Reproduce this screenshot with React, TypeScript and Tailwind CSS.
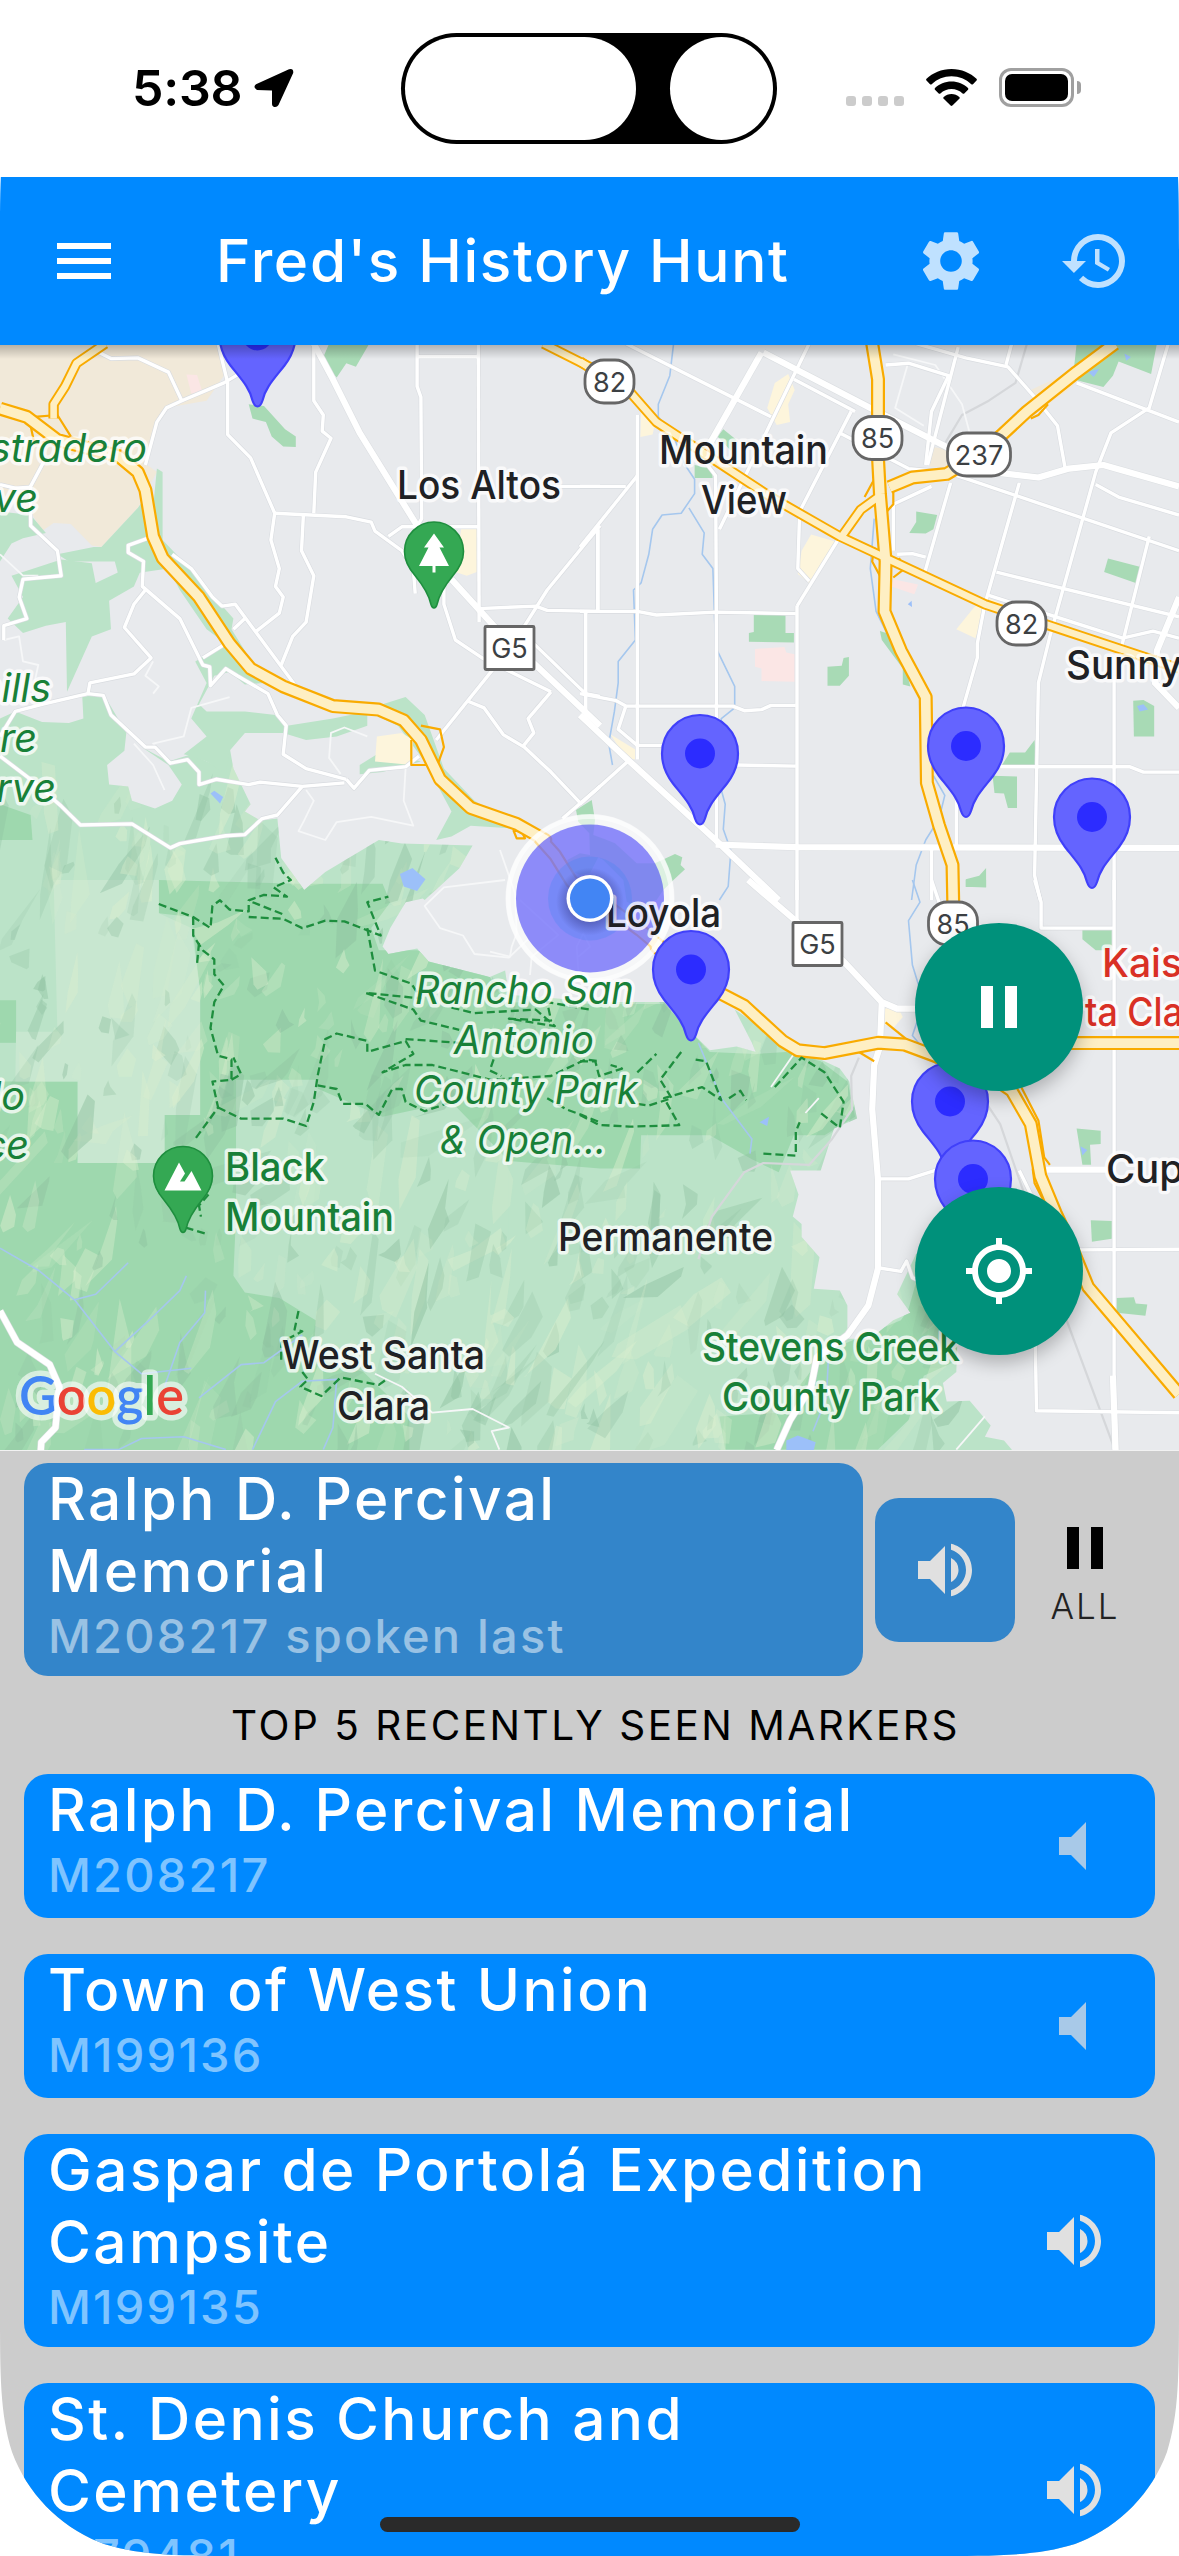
import React from "react";
import { MdHistory, MdMenu, MdMyLocation, MdPause, MdSettings, MdVolumeMute, MdVolumeUp } from "react-icons/md";

/* ---------- map geometry ---------- */

type Tile = { x: number; y: number; sx: number; sy: number };

// The map surface is split in four survey tiles plus a fine one (E) round the user's position,
// each with its own grid.
const TILES: Record<string, Tile> = {
  A: { x: 0, y: -5, sx: 0.38265, sy: 0.35714 },
  B: { x: 580, y: -5, sx: 0.38202, sy: 0.35714 },
  C: { x: 0, y: 535, sx: 0.38265, sy: 0.3699 },
  D: { x: 580, y: 535, sx: 0.38202, sy: 0.3699 },
  E: { x: 490, y: 455, sx: 0.3333, sy: 0.3333 },
};

function geo(spec: string): string {
  let tile = TILES.A;
  let out = "";
  for (const token of spec.trim().split(/\s+/)) {
    if (TILES[token]) {
      tile = TILES[token];
      continue;
    }
    const [u, v] = token.split(",").map(Number);
    out += `${out ? "L" : "M"}${(tile.x + u * tile.sx).toFixed(1)} ${(tile.y + v * tile.sy).toFixed(1)}`;
  }
  return out;
}

const HILLS =
  "A 0,1060 40,1040 110,1070 180,1072 218,1060 215,1000 270,990 330,1100 325,1150 280,1190 285,1245 335,1250 345,1290 405,1312 450,1290 475,1245 440,1190 370,1140 440,1180 500,1160 560,1190 600,1140 610,1200 655,1300 640,1320 680,1345 725,1340 735,1450 795,1540 850,1490 990,1400 1050,1410 1235,1415 1200,1480 1110,1568 C 1105,50 1060,60 1020,130 1000,180 1015,200 1090,185 1120,220 1280,262 1320,245 1330,310 1568,330 D 220,330 280,400 340,460 410,450 460,465 450,440 405,350 440,375 540,460 630,485 680,510 705,545 725,645 665,672 630,785 550,785 572,850 557,910 580,930 580,965 627,1020 612,1105 680,1110 700,1150 700,1240 760,1240 820,1190 865,1170 830,1120 880,1010 930,1050 990,1200 985,1330 950,1360 960,1410 1020,1408 1075,1475 1060,1505 1110,1515 1130,1540 1130,1568 C 0,1568";

const LIGHT_GREEN = [
  "A 0,480 80,490 120,540 60,555 30,570 0,620",
  "A 265,580 360,470 380,440 400,470 410,360 425,370 425,560 470,610 610,780 605,810 640,870 680,940 690,960 640,965 600,930 560,940 520,1020 540,1040 640,1040 720,1050 750,1080 870,1060 960,1040 960,1080 880,1110 800,1120 740,1100 640,1100 600,1150 590,1215 540,1180 500,1165 480,1160 540,1110 500,1060 540,960 510,900 590,850 540,810 470,700 440,640 310,660 300,620 180,620 150,600 245,580",
  "A 30,660 160,615 240,625 250,680 330,640 370,640 350,690 285,730 290,810 240,830 175,985 172,790 120,800 60,820 20,780 60,720",
  "A 870,1010 1000,1020 1060,1000 1110,1050 1160,1200 1240,1290 1300,1330 1380,1370 1230,1360 1180,1390 1140,1400 1180,1320 1110,1180 1040,1080 960,1040",
  "A 940,1190 1000,1150 1100,1180 1000,1210 940,1216",
];

const MEDIUM_GREEN = [
  "C 415,0 780,10 1000,10 1020,60 970,130 990,190 1090,190 1280,262 1320,330 1568,335 D 220,335 340,465 460,470 540,465 630,490 700,545 720,640 640,690 560,690 520,790 450,755 340,690 160,690 157,780 0,780 C 1568,780 1330,760 1180,600 1000,640 820,560 617,540 617,900 610,1070 640,1115 730,1130 825,1190 820,1290 950,1330 1070,1450 1070,1568 0,1568 0,545 203,545 203,765 430,765 430,635 523,635 523,300 500,100 415,90",
  "A 0,1300 80,1330 85,1400 0,1400",
  "C 0,325 42,325 42,440 0,440",
  "D 365,1450 520,1440 640,1280 700,1250 840,1190 860,1160 890,1050 960,1100 990,1200 985,1300 900,1340 860,1460 780,1540 380,1540",
];

const CITY_PARKS = [
  "A 860,10 965,10 930,75 905,65 880,105 840,60",
  "A 650,180 690,185 745,250 773,270 773,300 740,298 710,270 695,230 660,220",
  "B 1300,10 1510,10 1495,95 1410,60 1395,100 1370,132 1290,110",
  "B 455,770 538,770 538,820 560,820 560,847 442,845 442,820 455,818",
  "B 648,915 685,912 690,890 704,888 704,940 680,968 648,968",
  "B 880,480 935,490 925,530 905,542 862,540 880,510",
  "B 1382,612 1465,635 1455,680 1372,650",
  "B 1448,1010 1475,1008 1503,1025 1503,1110 1450,1110",
  "B 1105,1190 1125,1155 1165,1155 1190,1120 1194,1190",
  "B 1080,1220 1144,1222 1144,1310 1120,1310 1110,1270 1085,1268",
  "B 1010,1510 1045,1500 1063,1478 1063,1532 1010,1532",
  "B 300,350 345,360 347,386 300,386",
  "B 360,270 375,250 410,280 395,310",
  "B 785,815 830,830 865,970 845,965 845,920 790,840",
  "D 1010,0 1063,0 1063,20 1010,18",
  "D 1315,135 1392,135 1392,190 1350,190 1315,160",
  "D 1300,672 1363,678 1363,714 1335,716 1338,770 1315,770",
  "D 1337,920 1392,922 1392,970 1340,978",
  "D 1405,1130 1450,1128 1455,1145 1485,1148 1480,1178 1405,1170",
  "E 258,30 305,0 315,60 310,105 345,118 375,130 440,190 495,190 555,162 577,172 572,195 585,208 545,245 520,270 500,300 440,320 410,305 400,240 340,180 325,172 300,220 270,225 235,210 232,180 270,160 300,165 298,100 265,65",
];

const SHOPPING = [
  "A 985,1110 1050,1100 1080,1120 1075,1190 980,1180",
  "A 1205,530 1246,530 1246,650 1220,660 1190,650",
  "B 510,120 545,95 562,140 545,180 550,230 515,238 490,190",
  "B 160,200 195,240 190,265 158,272",
  "B 605,545 670,565 600,680 570,655 580,590",
  "B 1030,750 1060,720 1110,740 1060,760 1035,835 985,810",
  "B 80,1105 150,1150 145,1175 120,1170",
  "D 790,350 830,340 845,370 820,400 795,390",
];

const HOSPITALS = [
  "B 458,865 535,860 540,875 562,880 562,957 475,955 475,920 458,915",
  "B 820,670 885,685 875,712 815,690",
  "A 487,97 515,98 530,150 500,150",
];

const CREEKS = [
  "B 245,10 235,100 205,180 205,215 245,270 275,350 300,390 300,430 265,485 215,490 190,530 180,600 160,680 140,700 145,840 100,900 100,960 90,1040 75,1130 85,1190",
  "B 285,470 325,540 320,600 348,640 355,860 405,970 405,1030 370,1060 365,1240 380,1300 375,1370 395,1430 388,1530 365,1568",
  "B 770,500 760,640 775,760 840,900",
  "B 925,1220 955,1275 940,1340 905,1400 880,1470 868,1568",
  "D 870,0 890,60 860,110 870,230 900,330 870,420 950,520",
  "C 0,995 100,1055 195,1135 300,1275 370,1335 500,1320",
  "C 195,1135 250,1120 335,1035",
  "C 300,1275 390,1190 470,1110 487,1070",
  "C 430,1370 470,1250 535,1170 537,1110",
  "C 520,1400 630,1310 690,1305 790,1230",
  "C 660,1540 720,1410 790,1355 880,1350 870,1480 845,1540",
  "C 220,1540 310,1540 370,1510 480,1505 590,1540",
  "D 310,440 370,590 450,700 445,740",
  "D 650,1300 645,1400 610,1490",
];

const PONDS = [
  "A 550,1270 560,1262 583,1280 575,1298",
  "A 1045,1495 1078,1478 1112,1510 1090,1543 1055,1530",
  "D 540,1515 570,1502 617,1520 612,1541 540,1541",
  "D 470,655 495,640 490,665",
  "B 1330,90 1360,80 1345,104",
  "B 1425,38 1442,48 1430,58",
  "B 1458,1025 1475,1020 1487,1035 1465,1040",
  "B 858,740 868,730 869,748",
  "D 1310,720 1328,730 1315,745",
];

const LANES = [
  "A 0,600 60,660 100,660",
  "A 10,840 50,830 60,900 100,910 90,960",
  "A 600,1000 500,1030 480,1110 400,1130 440,1180",
  "A 350,1130 400,1190 430,1260",
  "A 960,1110 900,1085 865,1100 860,1170 890,1215",
  "A 1060,1200 1055,1290 1080,1360 970,1335 880,1350 850,1400 780,1375 795,1345 820,1290 800,1260",
  "A 400,900 380,940 415,970 400,990",
  "C 1320,0 1160,20 1110,70 1150,130 1210,150 1240,200 1330,210 1380,160",
  "B 820,40 930,70 1000,180 1020,260",
  "B 860,60 825,190 900,240",
  "C 980,1335 1050,1370 1130,1440 1235,1430 1330,1480 1285,1490 1305,1540",
  "D 590,630 625,590",
  "D 500,560 560,470",
  "D 985,1540 1060,1450",
  "E 0,455 60,470 65,440 80,400 75,280 30,150",
  "E 90,300 205,405 125,470 120,525",
  "E 265,510 260,440 280,400 300,440 265,470",
];

const STREETS = [
  "A 250,30 290,52 360,50 440,90 475,170 435,190 410,230 380,350",
  "A 475,170 585,120 680,60",
  "A 570,10 595,120 595,265 655,330 718,485 708,560 730,640 720,690 740,720 730,765 670,815",
  "A 820,10 820,170 845,210 842,255 865,275 825,370 820,485",
  "A 718,485 905,495 970,510 980,535 1050,590 1080,640 1085,710",
  "A 793,490 788,590 820,660 800,790 765,830 735,910",
  "A 1090,10 1090,130 1100,160 1102,500 1085,530",
  "A 1250,10 1252,790",
  "A 1090,47 1250,47",
  "A 1015,550 1050,523 1250,523",
  "A 1440,410 1568,410",
  "A 1160,680 1160,740 1190,840 1260,890 1440,985",
  "A 1250,752 1400,745 1430,757 1568,760",
  "A 1365,810 1430,700 1568,520",
  "A 1530,760 1530,1060",
  "A 1562,530 1562,760",
  "A 1290,920 1140,1120",
  "A 1220,1010 1265,1030 1315,1105 1370,1140 1440,1210 1520,1300",
  "A 1440,985 1380,1060 1395,1100 1365,1140",
  "A 1395,850 1530,990 1568,998",
  "A 1470,1340 1568,1250",
  "A 115,340 80,410 80,520 150,590 160,660 60,670 50,720 70,780 10,800 10,840",
  "A 0,405 40,415 80,412",
  "A 400,550 335,575 335,595 375,620 372,690 470,780 530,910 548,915 550,968 590,920 620,940 700,990 725,1050 748,1080 740,1160 800,1200 905,1230",
  "A 380,700 350,740 325,805 395,890 350,935 235,960 230,990",
  "A 0,1110 40,1040 110,1020 230,990 270,995 290,1050 380,1140 405,1140 445,1185 490,1175 520,1210 520,1245 565,1230 650,1245 680,1238 790,1250 900,1240",
  "A 790,1250 725,1330 685,1340 640,1385 590,1388 470,1410 445,1422 345,1355 210,1358 160,1305 80,1230 0,1165",
  "A 905,1230 925,1255 965,1205 1060,1195 1095,1165",
  "A 450,600 500,640 555,720 580,745 615,740 770,965",
  "A 640,780 610,810",
  "A 590,850 530,890",
  "B 150,210 150,770 150,1175",
  "B 0,580 150,380",
  "B 0,410 120,410",
  "B 47,530 47,755",
  "B 15,760 15,1050",
  "B 0,760 150,760 200,770 355,762 565,766",
  "B 330,345 355,380 357,760 357,1410",
  "B 600,10 365,530",
  "B 120,10 500,215",
  "B 560,110 720,200",
  "B 710,200 575,480 570,640 600,675",
  "B 568,745 568,1568",
  "B 675,560 568,745",
  "B 0,990 95,1010 120,1025 400,1025 430,1038 475,1035 500,1023 565,1023",
  "B 120,1025 100,1090 150,1135 215,1135",
  "B 410,1190 565,1193",
  "B 0,1300 125,1180",
  "B 800,70 860,65 965,100 920,200 905,350",
  "B 990,20 910,350",
  "B 880,10 1010,50 1120,75 1190,160 1250,240 1270,360",
  "B 1130,10 1115,70",
  "B 1300,120 1568,230",
  "B 1540,10 1490,190 1390,260 1350,370 1230,830 1200,960 1190,1500 1205,1568",
  "B 680,260 860,360 960,370 1568,590",
  "B 1150,400 1060,740 1040,850 1040,890 1000,1040",
  "B 970,400 900,660",
  "B 820,590 820,460 920,410",
  "B 830,600 870,598 905,608",
  "B 1090,650 1568,775",
  "B 1070,715 1420,835 1500,815 1568,835",
  "B 1490,550 1415,870",
  "B 1350,405 1410,440 1568,490",
  "B 1398,940 1398,1568",
  "B 1100,1195 1440,1195 1475,1210 1568,1210",
  "B 985,1260 985,1420",
  "B 920,1420 920,1568",
  "D 568,0 568,110",
  "D 920,0 940,60",
  "D 1190,0 1207,60 1207,130 1395,130",
  "D 1398,0 1398,1540",
  "D 785,808 860,808 930,785",
  "D 1150,785 1185,860 1195,1435 1568,1440",
  "D 1300,1000 1568,998",
  "D 780,1048 840,1058 855,1030 870,1075 900,1090",
];

const ARTERIALS = [
  "A 820,10 870,110 940,260 1090,520",
  "A 1180,670 1290,800 1400,910 1568,1080",
  "B 0,1050 130,1180 355,1400 520,1568",
  "D 440,0 570,115 690,220 790,330 830,348 890,348",
  "B 355,1413 568,1420 1568,1422",
  "B 475,35 340,290",
  "B 480,35 760,190 960,300 1080,370 1200,385 1280,360 1370,350 1568,410",
  "D 790,330 785,450 770,500 765,620 780,810 780,1050 755,1150 700,1230 620,1290 605,1370 550,1460 515,1541",
  "B 1568,720 1510,870 1505,960 1568,1030",
  "D 1220,783 1380,783",
  "D 1395,1340 1402,1541",
  "C 0,1165 45,1250 130,1310 155,1370 145,1480 108,1520 105,1568",
];

const RAIL = [
  "B 1170,10 1140,120 1070,170 1000,210 955,290",
  "D 730,480 710,530 712,620 660,700 600,770 480,765 430,790 345,910 310,1025",
  "D 1010,520 1100,660 1180,900 1270,1180 1400,1540",
];

const HIGHWAYS = [
  "A 0,192 70,215 150,280 310,325 360,370 380,420 400,550 425,610 520,720 600,850 655,920 740,970 870,1025 990,1035 1055,1065 1100,1120 1150,1230 1230,1310 1350,1355 1425,1400 E 150,115 195,165 245,245 360,325 450,390 510,440 D 200,180 300,270 430,340 530,435 570,460 640,468 780,440 850,445 980,495 1060,520 1130,570 1180,660 1205,800 1245,900 1290,1000 1330,1100 1568,1390",
  "B 765,10 780,110 780,330 785,430 800,620 797,760 840,870 905,1000 908,1240 940,1360 975,1470 977,1568 D 977,100",
  "B 1400,10 1300,90 1170,200 1060,310 960,375 870,385 810,412",
  "D 1200,441 1568,441",
];

const SECONDARY = [
  "A 275,10 200,65 170,130 140,180 140,220",
  "A 1420,10 1568,90",
  "B 0,60 70,110 130,145 200,230 300,300 500,440 680,550 830,625 1060,740 1230,800 1568,920",
  "B 685,550 735,475 780,440",
];

const RAMPS = [
  "A 90,215 150,210 185,270",
  "A 80,240 90,290 180,275",
  "A 1075,1120 1075,1190 1130,1190",
  "A 1100,1080 1150,1090 1160,1140 1140,1200",
  "E 70,90 80,115 105,115 95,95 75,92",
  "B 745,440 765,400 785,370",
  "B 820,410 820,460 795,490",
  "B 770,580 765,620 785,660",
  "B 835,610 850,640 820,665",
  "B 1225,180 1200,210 1180,220",
  "D 800,385 860,435",
  "D 730,465 770,490",
  "D 1155,560 1200,650 1215,750 1230,770",
  "D 1185,780 1190,820 1215,870",
];

const TRAILS = [
  "C 415,65 505,100 550,130 555,70 575,55 600,80 650,85 650,55 690,40 750,45 715,20 760,0 740,-20 720,-60",
  "C 505,100 505,150 530,190 560,215 560,255 585,285 560,330 550,400 570,475 605,485 605,540 555,545 570,615 510,700",
  "C 520,170 515,225",
  "C 605,540 630,525 610,480",
  "C 650,100 740,105 790,130 850,110 900,112 995,150 960,60 1015,45",
  "C 660,60 745,95",
  "C 960,130 980,245 1075,280 1100,320 955,305 1080,350 1100,380 1200,405",
  "C 1180,345 1240,360 1400,350 1450,395 1330,375 1440,380 1430,330 1540,350",
  "C 570,615 630,645 740,645 800,665 820,600 830,530 850,430 880,415 960,435 960,465 1060,435 1080,470 1000,520 1060,500 1130,500 1280,540 1440,530 1530,485 1568,490",
  "C 1060,430 1200,440",
  "C 830,555 880,565 895,605 955,605 990,635 1025,565 1050,565 1060,600 1110,625 1180,600",
  "C 1290,485 1280,515 1310,530",
  "C 1430,590 1480,620 1520,635 1568,655",
  "D 0,490 40,490 50,530 110,510 80,500",
  "D 150,520 200,470",
  "D 265,465 210,540 240,590 180,610 150,605",
  "D 0,635 50,662 130,667 260,663 220,590 320,560 370,595 330,490 300,485",
  "D 390,590 420,570 435,595",
  "D 510,560 580,480 640,520 690,600 680,670 630,630",
  "D 480,740 565,745 565,680 575,655",
  "C 545,850 520,880 525,910",
  "C 485,940 535,955",
  "C 780,1165 770,1215 790,1220 735,1250 735,1300",
  "C 790,1330 805,1350 785,1370 840,1395 890,1345 990,1365 1010,1350",
];

/* Shaded relief: a deterministic scatter of irregular slanted facets over the hills. */
function relief() {
  let seed = 4021;
  const rnd = () => {
    seed = (seed * 16807) % 2147483647;
    return seed / 2147483647;
  };
  const out: { d: string; light: boolean; o: number }[] = [];
  for (let i = 0; i < 760; i++) {
    const x = rnd() * 960 - 10;
    const y = 450 + rnd() * 660;
    const big = rnd();
    const l = 8 + big * big * 40;
    const w = 3 + rnd() * 8 + big * 4;
    const a = -1.45 + rnd() * rnd() * 1.3;
    const c = Math.cos(a);
    const s = Math.sin(a);
    const pt = (u: number, v: number) => `${(x + u * c - v * s).toFixed(1)} ${(y + u * s + v * c).toFixed(1)}`;
    out.push({
      d: `M${pt(-l, w * (rnd() - 0.5))}L${pt(-l * rnd(), -w * rnd())}L${pt(l, -w * rnd())}L${pt(l * rnd(), w * rnd())}L${pt(-l * rnd(), w)}Z`,
      light: rnd() > 0.5,
      o: 0.1 + rnd() * 0.38,
    });
  }
  return out;
}

const RELIEF = relief();

type LabelProps = {
  x: number;
  y: number;
  w?: number;
  end?: boolean;
  italic?: boolean;
  tone?: "town" | "park" | "hospital";
  children: string;
};

const TONES = { town: "#202124", park: "#188038", hospital: "#d93025" };

function Label({ x, y, w, end, italic, tone = "town", children }: LabelProps) {
  return (
    <text
      x={x}
      y={y - 345}
      textAnchor={end ? "end" : "start"}
      textLength={w}
      lengthAdjust="spacingAndGlyphs"
      fontSize={39.5}
      fontWeight={450}
      fontStyle={italic ? "italic" : "normal"}
      fill={TONES[tone]}
      stroke="#ffffff"
      strokeOpacity={0.75}
      strokeWidth={7}
      strokeLinejoin="round"
      paintOrder="stroke"
    >
      {children}
    </text>
  );
}

function Shield({ x, y, w = 49, square, children }: { x: number; y: number; w?: number; square?: boolean; children: string }) {
  return (
    <g transform={`translate(${x} ${y - 345})`}>
      <rect x={-w / 2} y={-21.5} width={w} height={43} rx={square ? 1 : 19} fill="#fff" stroke="#666" strokeWidth={2.8} />
      <text y={10} textAnchor="middle" fontSize={27} fill="#3c4043">
        {children}
      </text>
    </g>
  );
}

function Pin({ x, y }: { x: number; y: number }) {
  return (
    <g transform={`translate(${x} ${y - 345})`}>
      <path
        d="M-38 0A38 38.5 0 0 1 38 0C38 12 34 21 27 30C16 44 8 52 5 65Q3 71 0 71Q-3 71 -5 65C-8 52 -16 44 -27 30C-34 21 -38 12 -38 0Z"
        fill="#6464ff"
        stroke="#4040fa"
        strokeWidth={2.2}
      />
      <circle r={15} fill="#2c2cff" />
    </g>
  );
}

function ParkPin({ x, y, children }: { x: number; y: number; children: React.ReactNode }) {
  return (
    <g transform={`translate(${x} ${y - 345})`}>
      <path
        d="M-29.500 0A29.500 29.500 0 0 1 29.500 0C29.500 10 25 17 19 24C10 35 5 43 3 53Q2 56.500 0 56.500Q-2 56.500 -3 53C-5 43 -10 35 -19 24C-25 17 -29.500 10 -29.500 0Z"
        fill="#34a853"
        stroke="#1e8e3e"
        strokeWidth={1.6}
      />
      {children}
    </g>
  );
}

const GOOGLE: [string, string][] = [
  ["G", "#4285f4"],
  ["o", "#ea4335"],
  ["o", "#fbbc04"],
  ["g", "#4285f4"],
  ["l", "#34a853"],
  ["e", "#ea4335"],
];

function Lines({ items, color, width, dash }: { items: string[]; color: string; width: number; dash?: string }) {
  return (
    <g fill="none" stroke={color} strokeWidth={width} strokeDasharray={dash} strokeLinejoin="round">
      {items.map((s) => (
        <path key={s} d={geo(s)} />
      ))}
    </g>
  );
}

function Areas({ items, color }: { items: string[]; color: string }) {
  return (
    <g fill={color}>
      {items.map((s) => (
        <path key={s} d={geo(s)} />
      ))}
    </g>
  );
}

function MapArt() {
  return (
    <svg className="block h-full w-full font-['Inter',sans-serif]" viewBox="0 0 1179 1105" preserveAspectRatio="none">
      <defs>
        <clipPath id="hills">
          <path d={geo(HILLS)} />
        </clipPath>
        <linearGradient id="headerShade" x1="0" y1="0" x2="0" y2="1">
          <stop offset="0" stopColor="#000" stopOpacity="0.24" />
          <stop offset="1" stopColor="#000" stopOpacity="0" />
        </linearGradient>
        <radialGradient id="dotShade">
          <stop offset="0.55" stopColor="#202060" stopOpacity="0.4" />
          <stop offset="1" stopColor="#202060" stopOpacity="0" />
        </radialGradient>
      </defs>
      <rect width="1179" height="1105" fill="#e8eaed" />
      <Areas color="#f1e9d9" items={["A 0,0 575,0 585,100 540,170 430,190 405,250 385,350 410,370 360,470 265,580 240,575 185,515 140,512 110,535 80,480 0,440", "B 920,300 965,305 985,355 915,355", "B 1180,140 1300,80 1290,130 1200,200"]} />
      <Areas color="#bbe3c8" items={[HILLS, ...LIGHT_GREEN]} />
      <g clipPath="url(#hills)">
        <Areas color="#9ed8ae" items={MEDIUM_GREEN} />
        <Areas color="#c8e7d0" items={["C 415,90 500,130 523,300 523,635 430,635 430,765 203,765 203,545 40,545 42,410 150,410 140,0 415,0"]} />
        <Areas color="#bbe3c8" items={["C 617,540 830,540 830,650 1150,650 1330,780 1330,1000 617,1000"]} />
        {RELIEF.map((f) => (
          <path key={f.d} d={f.d} fill={f.light ? "#dcefcf" : "#8dbf9f"} opacity={f.o} />
        ))}
      </g>
      <Areas color="#a8dab5" items={CITY_PARKS} />
      <Areas color="#fdf5dc" items={SHOPPING} />
      <Areas color="#fbe6e5" items={HOSPITALS} />
      <Lines items={CREEKS} color="#a5c7ee" width={1.6} />
      <Areas color="#9cc0f9" items={PONDS} />
      <Lines items={RAIL} color="#d5d7da" width={2.2} />
      <Lines items={LANES} color="#f6f7f8" width={1.8} />
      <Lines items={STREETS} color="#d9dce0" width={4.6} />
      <Lines items={ARTERIALS} color="#dcdfe2" width={7.4} />
      <Lines items={STREETS} color="#ffffff" width={3.4} />
      <Lines items={ARTERIALS} color="#ffffff" width={6.2} />
      <Lines items={RAMPS} color="#f9ab00" width={2.2} />
      <Lines items={SECONDARY} color="#f9ab00" width={10.4} />
      <Lines items={HIGHWAYS} color="#f9ab00" width={14} />
      <Lines items={SECONDARY} color="#feefc3" width={6.6} />
      <Lines items={HIGHWAYS} color="#feefc3" width={9.6} />
      <Lines items={TRAILS} color="#1e8e3e" width={2.3} dash="8 4" />

      {/* accuracy and search radius of the user's position */}
      <g transform="translate(590 553.500)">
        <circle r={84} fill="#ffffff" opacity={0.6} />
        <circle r={82} fill="none" stroke="#ffffff" strokeWidth={5} opacity={0.6} />
        <circle r={74} fill="#302cf9" opacity={0.53} />
        <circle r={42} fill="#4285f4" opacity={0.28} />
      </g>

      <Shield x={609.5} y={381.500}>82</Shield>
      <Shield x={877.5} y={438}>85</Shield>
      <Shield x={979} y={454.500} w={63}>237</Shield>
      <Shield x={1021.500} y={623.500}>82</Shield>
      <Shield x={953} y={923.500}>85</Shield>
      <Shield x={509.500} y={648} square>G5</Shield>
      <Shield x={817.500} y={944} square>G5</Shield>

      <Label x={397} y={499} w={164}>Los Altos</Label>
      <Label x={659} y={464} w={169}>Mountain</Label>
      <Label x={701} y={514} w={86}>View</Label>
      <Label x={1066} y={678.500} w={116}>Sunny</Label>
      <Label x={606} y={927} w={115}>Loyola</Label>
      <Label x={558} y={1251} w={215}>Permanente</Label>
      <Label x={282} y={1369} w={203}>West Santa</Label>
      <Label x={337} y={1419.500} w={93}>Clara</Label>
      <Label x={1106} y={1183} w={78}>Cup</Label>
      <Label x={147} y={462} end italic tone="park">stradero</Label>
      <Label x={38} y={512} end italic tone="park">ve</Label>
      <Label x={51} y={702} end italic tone="park">hills</Label>
      <Label x={37} y={751.500} end italic tone="park">re</Label>
      <Label x={56} y={802} end italic tone="park">rve</Label>
      <Label x={25} y={1110} end italic tone="park">lo</Label>
      <Label x={29} y={1159} end italic tone="park">ce</Label>
      <Label x={415} y={1003.500} w={219} italic tone="park">Rancho San</Label>
      <Label x={454} y={1054} w={140} italic tone="park">Antonio</Label>
      <Label x={414} y={1104} w={224} italic tone="park">County Park</Label>
      <Label x={440} y={1154} w={166} italic tone="park">& Open...</Label>
      <Label x={225} y={1181} w={100} tone="park">Black</Label>
      <Label x={225} y={1231} w={169} tone="park">Mountain</Label>
      <Label x={702} y={1361} w={258} tone="park">Stevens Creek</Label>
      <Label x={722} y={1411} w={218} tone="park">County Park</Label>
      <Label x={1102} y={977} w={80} tone="hospital">Kais</Label>
      <Label x={1085} y={1026} w={98} tone="hospital">ta Cla</Label>

      <ParkPin x={434} y={551.500}>
        <path d="M0 -18L10 -4H5.500L15 14.500H1.500V21H-1.500V14.500H-15L-5.500 -4H-10Z" fill="#fff" />
      </ParkPin>
      <ParkPin x={183} y={1176}>
        <path d="M-18.500 14.500L-4 -13.500L2 -2.500L-3 5.500H1.500L8.500 -5L18.500 14.500Z" fill="#fff" />
      </ParkPin>

      <g transform="translate(590 553.500)">
        <circle r={34} cy={3} fill="url(#dotShade)" />
        <circle r={23.500} fill="#fff" />
        <circle r={20} fill="#4285f4" />
      </g>

      <Pin x={257.500} y={335.500} />
      <Pin x={700} y={753.500} />
      <Pin x={966} y={746} />
      <Pin x={1092} y={817} />
      <Pin x={691} y={969.500} />
      <Pin x={950} y={1101.500} />
      <Pin x={973} y={1179} />

      <text
        x={19}
        y={1070}
        textLength={165}
        lengthAdjust="spacingAndGlyphs"
        fontSize={53}
        fontWeight={600}
        className="font-['Lato',sans-serif]"
        stroke="#fff"
        strokeOpacity={0.6}
        strokeWidth={11}
        strokeLinejoin="round"
        paintOrder="stroke"
      >
        {GOOGLE.map(([ch, color], i) => (
          <tspan key={i} fill={color}>
            {ch}
          </tspan>
        ))}
      </text>
      <rect width="1179" height="14" fill="url(#headerShade)" />
    </svg>
  );
}

/* ---------- chrome ---------- */

function StatusBar() {
  return (
    <div className="flex h-[177px] shrink-0 items-start bg-white">
      <div className="flex w-[401px] items-center pt-[57px] pl-[132px]">
        <span className="text-[50px] leading-[62px] font-semibold tracking-[-0.2px] text-black">5:38</span>
        <svg className="ml-auto mr-[107px] h-[40px] w-[40px]" viewBox="0 0 40 40">
          <path d="M35 1.300Q39.800 0 39.200 5L24.500 37Q22.500 40 19.200 38.500Q18 37.500 18 36V22.500L3 22Q-1.500 19 2 16.300Z" fill="#000" />
        </svg>
      </div>
      <div className="mt-[33px] flex h-[111px] w-[376px] justify-between rounded-full bg-black p-1">
        <div className="w-[231px] rounded-full bg-white" />
        <div className="w-[103px] rounded-full bg-white" />
      </div>
      <div className="ml-[69px] flex gap-[6px] pt-[96px]">
        {[0, 1, 2, 3].map((i) => (
          <span key={i} className="h-[10px] w-[10px] rounded-[3px] bg-[#cccccc]" />
        ))}
      </div>
      <svg className="mt-[69px] ml-[22px] h-[37px] w-[51px]" viewBox="0 0 51 37">
        <path d="M25.500 0C35.500 0 44.500 4 50.500 9.800Q51.300 10.700 50.500 11.600L47 15.200Q46.200 16 45.300 15.200C40 10.200 33 7.300 25.500 7.300S11 10.200 5.700 15.200Q4.800 16 4 15.200L.5 11.600Q-.3 10.700.5 9.800C6.500 4 15.500 0 25.500 0Z" />
        <path d="M25.500 12.500C32 12.500 37.700 15 42 19Q42.800 20 42 20.800L38.300 24.500Q37.500 25.200 36.600 24.400C33.600 21.600 29.700 20 25.500 20S17.400 21.600 14.400 24.400Q13.500 25.200 12.700 24.500L9 20.800Q8.200 20 9 19C13.300 15 19 12.500 25.500 12.500Z" />
        <path d="M25.500 25C28.500 25 31.200 26.100 33.300 28Q34.200 28.900 33.300 29.800L26.400 36.500Q25.500 37.300 24.600 36.500L17.700 29.800Q16.800 28.900 17.700 28C19.800 26.100 22.500 25 25.500 25Z" />
      </svg>
      <div className="mt-[68px] ml-[22px] h-[39px] w-[75px] rounded-[12px] border-[3px] border-[#a0a0a0] p-[3px]">
        <div className="h-full w-full rounded-[7px] bg-black" />
      </div>
      <div className="mt-[81px] ml-[3px] h-[13px] w-[4px] rounded-r-full bg-[#a0a0a0]" />
    </div>
  );
}

function Header() {
  return (
    <header className="flex h-[168px] shrink-0 items-center bg-[#0089ff] text-white">
      <MdMenu className="ml-12 h-[72px] w-[72px]" />
      <h1 className="ml-[96px] grow text-[58.5px] leading-none font-medium tracking-[1.7px] whitespace-nowrap">Fred's History Hunt</h1>
      <MdSettings className="mr-[72px] h-[72px] w-[72px] text-white/75" />
      <MdHistory className="mr-[48px] h-[72px] w-[72px] text-white/75" />
    </header>
  );
}

type Marker = { id: string; lines: string[]; playing: boolean };

const MARKERS: Marker[] = [
  { id: "M208217", lines: ["Ralph D. Percival Memorial"], playing: false },
  { id: "M199136", lines: ["Town of West Union"], playing: false },
  { id: "M199135", lines: ["Gaspar de Portolá Expedition", "Campsite"], playing: true },
  { id: "M79481", lines: ["St. Denis Church and", "Cemetery"], playing: true },
];

function MarkerText({ lines, detail }: { lines: string[]; detail: string }) {
  return (
    <div className="grow whitespace-nowrap">
      {lines.map((line) => (
        <p key={line} className="text-[58.5px] leading-[72px] font-medium tracking-[2.4px] text-white">
          {line}
        </p>
      ))}
      <p className="text-[47px] leading-[57px] font-medium tracking-[2.2px] text-white/50">{detail}</p>
    </div>
  );
}

export default function App() {
  return (
    <div className="h-[2556px] w-[1179px] overflow-hidden bg-white font-['Inter',sans-serif]">
      <div className="flex h-full flex-col bg-white [clip-path:path('M252_0H927C999_0_1036_0_1068_11L1075_12C1118_28_1151_61_1167_104C1179_143_1179_180_1179_252V2304C1179_2376_1179_2413_1167_2452C1151_2495_1118_2528_1075_2544C1036_2556_999_2556_927_2556H252C180_2556_143_2556_104_2544C61_2528_28_2495_12_2452C0_2413_0_2376_0_2304V252C0_180_0_143_12_104C28_61_61_28_104_12C143_0_180_0_252_0Z')]">
        <StatusBar />
        <Header />
        <section className="relative h-[1105px] shrink-0">
          <MapArt />
          <div className="absolute top-[578px] right-24 flex flex-col gap-24">
            <button className="flex h-[168px] w-[168px] items-center justify-center rounded-full bg-[#00917b] text-white shadow-[0_8px_18px_rgba(0,0,0,0.25)]">
              <MdPause className="h-[72px] w-[72px]" />
            </button>
            <button className="flex h-[168px] w-[168px] items-center justify-center rounded-full bg-[#00917b] text-white shadow-[0_8px_18px_rgba(0,0,0,0.25)]">
              <MdMyLocation className="h-[72px] w-[72px]" />
            </button>
          </div>
        </section>

        <section className="grow border-t border-[#f2f2f2] bg-[#cccccc]">
          <div className="flex items-center pt-3 pl-6">
            <div className="flex h-[213px] w-[839px] rounded-3xl bg-[#3385ca] pl-6">
              <MarkerText lines={["Ralph D. Percival", "Memorial"]} detail="M208217 spoken last" />
            </div>
            <button className="ml-3 flex h-[144px] w-[140px] items-center justify-center rounded-3xl bg-[#3385ca] text-[#e0e0e0]">
              <MdVolumeUp className="h-[72px] w-[72px]" />
            </button>
            <button className="ml-[23px] flex w-[94px] flex-col items-center text-black">
              <MdPause className="h-[72px] w-[72px]" />
              <span className="text-[35px] leading-[44px] font-light tracking-[2px] text-[#222222]">ALL</span>
            </button>
          </div>
          <h2 className="mt-[26px] pl-3 text-center text-[40.5px] leading-[48px] tracking-[2.5px] text-black">TOP 5 RECENTLY SEEN MARKERS</h2>
          <ul className="mt-6 flex flex-col gap-9 px-6">
            {MARKERS.map((m) => (
              <li
                key={m.id}
                className={
                  m.lines.length > 1
                    ? "flex h-[213px] items-center rounded-3xl bg-[#0089ff] pr-[45px] pl-6"
                    : "flex h-[144px] items-center rounded-3xl bg-[#0089ff] pr-[45px] pl-6"
                }
              >
                <div className="flex h-full grow">
                  <MarkerText lines={m.lines} detail={m.id} />
                </div>
                {m.playing ? (
                  <MdVolumeUp className="h-[72px] w-[72px] text-[#e0e0e0]" />
                ) : (
                  <MdVolumeMute className="h-[72px] w-[72px] text-[#a8c9e8]" />
                )}
              </li>
            ))}
          </ul>
        </section>
      </div>
      <div className="relative mx-auto -mt-[39px] h-[15px] w-[420px] rounded-full bg-[#2a2a2a]" />
    </div>
  );
}
